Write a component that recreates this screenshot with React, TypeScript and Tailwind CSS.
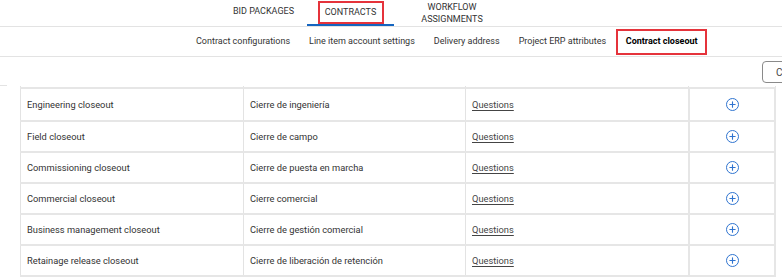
import { Plus } from 'lucide-react';

const rows = [
  { name: 'Engineering closeout', label: 'Cierre de ingeniería' },
  { name: 'Field closeout', label: 'Cierre de campo' },
  { name: 'Commissioning closeout', label: 'Cierre de puesta en marcha' },
  { name: 'Commercial closeout', label: 'Cierre comercial' },
  { name: 'Business management closeout', label: 'Cierre de gestión comercial' },
  { name: 'Retainage release closeout', label: 'Cierre de liberación de retención' },
];

const subTabs = ['Contract configurations', 'Line item account settings', 'Delivery address', 'Project ERP attributes'];

function AddIcon() {
  return (
    <span className="flex h-[13px] w-[13px] items-center justify-center rounded-full border-[1.5px] border-[#2f74d0]">
      <Plus className="h-[9px] w-[9px] text-[#2f74d0]" strokeWidth={3} />
    </span>
  );
}

export default function App() {
  return (
    <div className="h-[278px] w-[782px] overflow-hidden bg-white text-[#333] font-['Roboto',sans-serif]">
      {/* Main tabs */}
      <div className="flex h-[27px] border-b border-[#e3e3e3] pl-[220px] text-[9px] uppercase">
        <div className="flex w-[87px] items-center justify-center pb-[3px]">Bid packages</div>
        <div className="relative flex w-[87px] items-center justify-center border-b-2 border-[#1565c0]">
          <span className="mt-[1px] flex h-[23px] w-[66px] items-center justify-center self-start border-2 border-[#e5333b]">
            Contracts
          </span>
        </div>
        <div className="flex w-[116px] flex-col items-center justify-center pb-[1px] text-center leading-[12px]">
          <span>Workflow</span>
          <span>Assignments</span>
        </div>
      </div>

      {/* Sub tabs */}
      <div className="flex h-[30px] items-center border-b border-[#e3e3e3] pl-[196px] text-[9px]">
        {subTabs.map((t) => (
          <span key={t} className="mr-[19px]">{t}</span>
        ))}
        <span className="-ml-[9px] flex h-[26px] w-[91px] items-center justify-center border-2 border-[#e5333b] font-bold text-black">
          Contract closeout
        </span>
      </div>

      {/* Toolbar */}
      <div className="flex justify-end pt-[4px]">
        <button className="-mr-[40px] h-[22px] w-[60px] rounded-[4px] border border-[#8a8a8a] pl-[13px] text-left text-[10px] text-[#444]">
          Cancel
        </button>
      </div>

      <div className="mt-[2px] h-px w-[7px] bg-[#e3e3e3]" />

      {/* Table */}
      <div className="ml-[20px] w-[756px]">
        <div className="grid h-[1px] grid-cols-[223px_222px_223px_88px]">
          <div className="border-l border-[#e3e3e3]" />
          <div className="border-l border-[#e3e3e3]" />
          <div className="border-l border-[#e3e3e3]" />
          <div className="border-x border-[#e3e3e3]" />
        </div>
        <div className="border-b-2 border-t-2 border-[#e6e6e6]">
          {rows.map((r, i) => (
            <div
              key={r.name}
              className={`grid h-[31px] grid-cols-[223px_222px_223px_88px] text-[9.3px] ${i > 0 ? 'border-t-2 border-[#e6e6e6]' : ''}`}
            >
              <div className="flex items-center border-l border-[#e3e3e3] pl-[6px]">{r.name}</div>
              <div className="flex items-center border-l border-[#e3e3e3] pl-[6px]">{r.label}</div>
              <div className="flex items-center border-l border-[#e3e3e3] pl-[6px]">
                <a className="text-[#444] underline underline-offset-[2px]">Questions</a>
              </div>
              <div className="flex items-center justify-center border-x-2 border-[#e6e6e6] pl-[1px]">
                <AddIcon />
              </div>
            </div>
          ))}
        </div>
      </div>
    </div>
  );
}
